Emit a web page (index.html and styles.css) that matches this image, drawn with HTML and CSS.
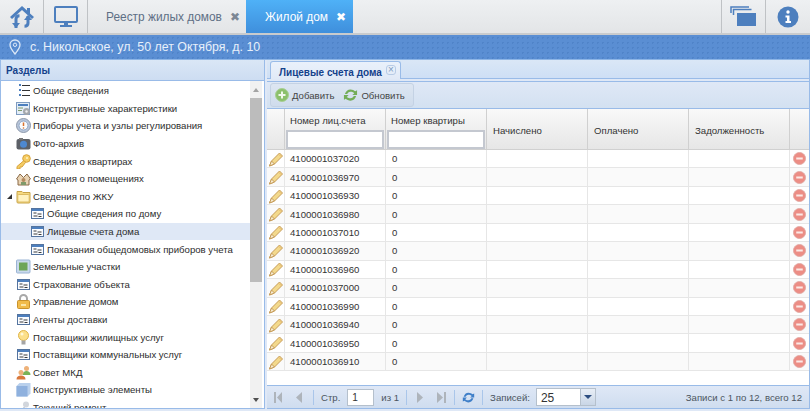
FILE: index.html
```html
<!DOCTYPE html>
<html>
<head>
    <title>Жилой дом</title>
    <link rel="stylesheet" href="styles.css">
</head>
<body>
    <svg class="defs">
        <defs>
            <symbol id="i-doc" viewBox="0 0 15 15">
                <rect x="1.500" y="2.500" width="12" height="10" fill="#fafcff" stroke="#54749f"/>
                <rect x="2" y="3" width="11" height="2" fill="#4d7fbe"/>
                <path d="M3.500 7h3M7.500 8h4M3.500 10h4M8.500 10.500h3" stroke="#3b3b3b" fill="none"/>
            </symbol>
            <symbol id="i-pencil" viewBox="0 0 16 16">
                <path d="M3.500 10 11.500 2 14.500 5 6.500 13 1.500 15Z" fill="#f3d98c" stroke="#c69c58"/>
                <path d="M11 3.500 13 5.500" stroke="#e9b765" fill="none"/>
                <path d="M1.500 15 3.500 10 6.500 13Z" fill="#f6ead0" stroke="#c69c58"/>
            </symbol>
            <symbol id="i-minus" viewBox="0 0 14 14">
                <circle cx="7" cy="7" r="6.500" fill="#ec8d85" stroke="#e2aaa4"/>
                <rect x="3.500" y="5.900" width="7" height="2.200" fill="#fbe9e6"/>
            </symbol>
        </defs>
    </svg>

    <header class="topbar">
        <div class="top-btn">
            <svg width="26" height="24" viewBox="0 0 26 24">
                <path d="M13 1 1 12l2 2L13 5l10 9 2-2-4-3.600V3h-3v2.600Z" fill="#4d7fbe"/>
                <path d="M7 23V14c0-2 1.500-3.200 3.500-3.200" fill="none" stroke="#4d7fbe" stroke-width="3"/>
                <path d="M3 18h8l-4 5Z" fill="#4d7fbe"/>
                <path d="M19 11v7c0 2-1.500 3.200-3.500 3.200" fill="none" stroke="#4d7fbe" stroke-width="3"/>
                <path d="M15 15h8l-4-5Z" fill="#4d7fbe"/>
            </svg>
        </div>
        <div class="top-btn">
            <svg width="24" height="22" viewBox="0 0 24 22">
                <rect x="1" y="1" width="22" height="15" rx="1" fill="none" stroke="#4d7fbe" stroke-width="2"/>
                <path d="M10 17h4v2h4v2H6v-2h4Z" fill="#4d7fbe"/>
            </svg>
        </div>
        <div class="tab">Реестр жилых домов <span class="tab-x">✖</span></div>
        <div class="tab tab-active">Жилой дом <span class="tab-x">✖</span></div>
        <div class="top-fill"></div>
        <div class="top-btn top-btn-right">
            <svg width="27" height="21" viewBox="0 0 27 21">
                <path d="M1 7V1h18M3.500 9V3.500h18" fill="none" stroke="#4d7fbe" stroke-width="1.500"/>
                <rect x="7" y="7" width="19" height="13" fill="#4d7fbe"/>
            </svg>
        </div>
        <div class="top-btn top-btn-right top-btn-last">
            <svg width="22" height="22" viewBox="0 0 22 22">
                <circle cx="11" cy="11" r="10.500" fill="#4d7fbe"/>
                <circle cx="11" cy="6" r="1.700" fill="#fff"/>
                <path d="M8.500 9.500H12.500V15H14V17H8.500V15H10V11.500H8.500Z" fill="#fff"/>
            </svg>
        </div>
    </header>

    <div class="address">
        <svg width="12" height="16" viewBox="0 0 12 16">
            <path d="M6 1C3 1 1 3.200 1 5.800 1 9 6 15 6 15s5-6 5-9.200C11 3.200 9 1 6 1Z" fill="none" stroke="#dbe7f6" stroke-width="1.300"/>
            <circle cx="6" cy="5.800" r="1.700" fill="none" stroke="#dbe7f6"/>
        </svg>
        с. Никольское, ул. 50 лет Октября, д. 10
    </div>

    <main class="content">
        <aside class="side">
            <div class="side-title">Разделы</div>
            <div class="side-body">
                <ul class="tree">
                    <li><svg class="ico" viewBox="0 0 15 15"><path d="M3 2h2M3 7h2M3 12h2" stroke="#4d7fbe" stroke-width="2"/><path d="M6 2.500h8M6 7.500h8M6 12.500h8" stroke="#333"/></svg>Общие сведения</li>
                    <li><svg class="ico" viewBox="0 0 15 15"><rect x="0.500" y="1.500" width="13" height="12" fill="#e4edf7" stroke="#7f9cc0"/><path d="M2 4h10" stroke="#4d7fbe" stroke-width="2"/><path d="M2 7h5M2 9.500h4" stroke="#7d9a6a"/><circle cx="10.500" cy="10.500" r="3.500" fill="#a4a8ad"/><circle cx="10.500" cy="10.500" r="1.200" fill="#eee"/></svg>Конструктивные характеристики</li>
                    <li><svg class="ico" viewBox="0 0 15 15"><circle cx="7.500" cy="7.500" r="7" fill="#b9c6da" stroke="#8d99ab"/><circle cx="7.500" cy="7.500" r="4.500" fill="#fbfbfb" stroke="#8fa6c6"/><path d="M7.500 4.500v3.500" stroke="#d8702c" stroke-width="1.500"/><circle cx="7.500" cy="10" r="0.800" fill="#d8702c"/></svg>Приборы учета и узлы регулирования</li>
                    <li><svg class="ico" viewBox="0 0 15 15"><rect x="0.500" y="3" width="14" height="10.500" rx="2" fill="#5c6067"/><rect x="3" y="2" width="4" height="2" fill="#777"/><circle cx="7.500" cy="8.200" r="3.500" fill="#4d88d0"/></svg>Фото-архив</li>
                    <li><svg class="ico" viewBox="0 0 15 15"><circle cx="10.500" cy="4.500" r="3.800" fill="#f5cc62" stroke="#d6a23c"/><path d="M8 6.500 1 12.500V15h3v-2h2l3.500-4.500Z" fill="#f5cc62" stroke="#d6a23c"/><circle cx="11" cy="4" r="1" fill="#fff3c4"/></svg>Сведения о квартирах</li>
                    <li><svg class="ico" viewBox="0 0 15 15"><path d="M0.500 8 4 3l3.500 3.500L11 3l3.500 5-1.500 1v5H2V9Z" fill="#e8d3b4" stroke="#8b6a47"/><circle cx="7.500" cy="9" r="2" fill="#b48a5e"/><rect x="5" y="11" width="5" height="3" fill="#7f9a6a"/></svg>Сведения о помещениях</li>
                    <li class="has-arrow"><span class="arrow"></span><svg class="ico" viewBox="0 0 15 15"><path d="M1 3.500V2.500h5l1 1h7v9.500a1 1 0 0 1-1 1H2a1 1 0 0 1-1-1Z" fill="#f6d97f" stroke="#c8a44a"/><rect x="1.800" y="5.500" width="11.400" height="7.500" rx="1" fill="#fff2c0" stroke="#dcbb62"/></svg>Сведения по ЖКУ</li>
                    <li class="sub"><svg class="ico"><use href="#i-doc"/></svg>Общие сведения по дому</li>
                    <li class="sub selected"><svg class="ico"><use href="#i-doc"/></svg>Лицевые счета дома</li>
                    <li class="sub"><svg class="ico"><use href="#i-doc"/></svg>Показания общедомовых приборов учета</li>
                    <li><svg class="ico" viewBox="0 0 15 15"><rect x="0.500" y="1" width="13.500" height="13" rx="1" fill="#c9d9ec" stroke="#9bb4d4"/><rect x="3" y="3.500" width="8.500" height="8" fill="#6da558"/></svg>Земельные участки</li>
                    <li><svg class="ico"><use href="#i-doc"/></svg>Страхование объекта</li>
                    <li><svg class="ico" viewBox="0 0 15 15"><path d="M4 7V4.500a3.500 3.500 0 0 1 7 0V7" fill="none" stroke="#a9a9a9" stroke-width="2"/><rect x="1.500" y="6.500" width="12" height="8" rx="1" fill="#f1bb4a" stroke="#c9922c"/><path d="M5 11h5" stroke="#fbe6a8" stroke-width="2"/></svg>Управление домом</li>
                    <li><svg class="ico"><use href="#i-doc"/></svg>Агенты доставки</li>
                    <li><svg class="ico" viewBox="0 0 15 15"><circle cx="7.500" cy="5.500" r="5" fill="#fce08a" stroke="#e0b548"/><circle cx="6" cy="4" r="1.500" fill="#fff8d8"/><rect x="5.500" y="10.500" width="4" height="4" fill="#a5a5a5"/></svg>Поставщики жилищных услуг</li>
                    <li><svg class="ico"><use href="#i-doc"/></svg>Поставщики коммунальных услуг</li>
                    <li><svg class="ico" viewBox="0 0 15 15"><circle cx="10.500" cy="3.500" r="2.500" fill="#eeb27a"/><path d="M6.500 10c0-3 2-4 4-4s4 1 4 4Z" fill="#79b257"/><circle cx="5" cy="7.500" r="2.500" fill="#eeb27a"/><path d="M0.500 14.500c0-3 2-4 4.500-4s4.500 1 4.500 4Z" fill="#d9783c"/></svg>Совет МКД</li>
                    <li><svg class="ico" viewBox="0 0 15 15"><path d="M0.500 4 3.500 1h11v10.500l-3 3H0.500Z" fill="#b9d0ec"/><path d="M0.500 4h11v10.500H0.500Z" fill="#8fb1de"/></svg>Конструктивные элементы</li>
                    <li><svg class="ico" viewBox="0 0 15 15"><path d="M1 14.500 8 7l2 2-7 6.500Z" fill="#a0a9b5"/><circle cx="10" cy="4.500" r="3" fill="#d2d6dc"/></svg>Текущий ремонт</li>
                </ul>
                <div class="scroll">
                    <span class="scroll-up"></span>
                    <span class="scroll-thumb"></span>
                    <span class="scroll-down"></span>
                </div>
            </div>
        </aside>

        <section class="panel">
            <div class="panel-tabs">
                <div class="panel-tab">Лицевые счета дома <span class="panel-tab-x">×</span></div>
            </div>
            <div class="tab-strip"></div>
            <div class="toolbar">
                <div class="tool-group">
                    <span class="tool tool-add">
                        <svg width="14" height="14" viewBox="0 0 14 14"><circle cx="7" cy="7" r="6.500" fill="#8cc06c" stroke="#a8cf94"/><path d="M7 3.500v7M3.500 7h7" stroke="#f1f8ec" stroke-width="2"/></svg>
                        Добавить
                    </span>
                    <span class="tool">
                        <svg width="15" height="14" viewBox="0 0 16 14"><path d="M2 6c1-3 3-5 6-5 2 0 4 1 5 2l2-1v5H10l2-2C11 4 9 3.500 8 3.500 6 3.500 5 5 4.500 6Z" fill="#74ad58"/><path d="M14 8c-1 3-3 5-6 5-2 0-4-1-5-2l-2 1V7h5L4 9c1 1 3 1.500 4 1.500 2 0 3-1.500 3.500-2.500Z" fill="#74ad58"/></svg>
                        Обновить
                    </span>
                </div>
            </div>

            <div class="grid">
                <div class="grid-head">
                    <div class="hc hc-edit"></div>
                    <div class="hc hc-filter">Номер лиц.счета<input class="filter" type="text"></div>
                    <div class="hc hc-filter">Номер квартиры<input class="filter" type="text"></div>
                    <div class="hc hc-num">Начислено</div>
                    <div class="hc hc-num">Оплачено</div>
                    <div class="hc hc-num">Задолженность</div>
                    <div class="hc hc-del"></div>
                </div>
                <div class="grid-body">
                    <div class="row"><div class="c c-edit"><svg class="pen"><use href="#i-pencil"/></svg></div><div class="c">4100001037020</div><div class="c c-flat">0</div><div class="c"></div><div class="c"></div><div class="c"></div><div class="c c-del"><svg class="del"><use href="#i-minus"/></svg></div></div>
                    <div class="row"><div class="c c-edit"><svg class="pen"><use href="#i-pencil"/></svg></div><div class="c">4100001036970</div><div class="c c-flat">0</div><div class="c"></div><div class="c"></div><div class="c"></div><div class="c c-del"><svg class="del"><use href="#i-minus"/></svg></div></div>
                    <div class="row"><div class="c c-edit"><svg class="pen"><use href="#i-pencil"/></svg></div><div class="c">4100001036930</div><div class="c c-flat">0</div><div class="c"></div><div class="c"></div><div class="c"></div><div class="c c-del"><svg class="del"><use href="#i-minus"/></svg></div></div>
                    <div class="row"><div class="c c-edit"><svg class="pen"><use href="#i-pencil"/></svg></div><div class="c">4100001036980</div><div class="c c-flat">0</div><div class="c"></div><div class="c"></div><div class="c"></div><div class="c c-del"><svg class="del"><use href="#i-minus"/></svg></div></div>
                    <div class="row"><div class="c c-edit"><svg class="pen"><use href="#i-pencil"/></svg></div><div class="c">4100001037010</div><div class="c c-flat">0</div><div class="c"></div><div class="c"></div><div class="c"></div><div class="c c-del"><svg class="del"><use href="#i-minus"/></svg></div></div>
                    <div class="row"><div class="c c-edit"><svg class="pen"><use href="#i-pencil"/></svg></div><div class="c">4100001036920</div><div class="c c-flat">0</div><div class="c"></div><div class="c"></div><div class="c"></div><div class="c c-del"><svg class="del"><use href="#i-minus"/></svg></div></div>
                    <div class="row"><div class="c c-edit"><svg class="pen"><use href="#i-pencil"/></svg></div><div class="c">4100001036960</div><div class="c c-flat">0</div><div class="c"></div><div class="c"></div><div class="c"></div><div class="c c-del"><svg class="del"><use href="#i-minus"/></svg></div></div>
                    <div class="row"><div class="c c-edit"><svg class="pen"><use href="#i-pencil"/></svg></div><div class="c">4100001037000</div><div class="c c-flat">0</div><div class="c"></div><div class="c"></div><div class="c"></div><div class="c c-del"><svg class="del"><use href="#i-minus"/></svg></div></div>
                    <div class="row"><div class="c c-edit"><svg class="pen"><use href="#i-pencil"/></svg></div><div class="c">4100001036990</div><div class="c c-flat">0</div><div class="c"></div><div class="c"></div><div class="c"></div><div class="c c-del"><svg class="del"><use href="#i-minus"/></svg></div></div>
                    <div class="row"><div class="c c-edit"><svg class="pen"><use href="#i-pencil"/></svg></div><div class="c">4100001036940</div><div class="c c-flat">0</div><div class="c"></div><div class="c"></div><div class="c"></div><div class="c c-del"><svg class="del"><use href="#i-minus"/></svg></div></div>
                    <div class="row"><div class="c c-edit"><svg class="pen"><use href="#i-pencil"/></svg></div><div class="c">4100001036950</div><div class="c c-flat">0</div><div class="c"></div><div class="c"></div><div class="c"></div><div class="c c-del"><svg class="del"><use href="#i-minus"/></svg></div></div>
                    <div class="row"><div class="c c-edit"><svg class="pen"><use href="#i-pencil"/></svg></div><div class="c">4100001036910</div><div class="c c-flat">0</div><div class="c"></div><div class="c"></div><div class="c"></div><div class="c c-del"><svg class="del"><use href="#i-minus"/></svg></div></div>
                </div>
            </div>

            <div class="pager">
                <svg class="pg pg-first" width="8" height="11" viewBox="0 0 8 11"><path d="M0 0h2v11H0ZM8 0v11L3 5.500Z" fill="#aeb4bb"/></svg>
                <svg class="pg pg-prev" width="6" height="11" viewBox="0 0 6 11"><path d="M6 0v11L0 5.500Z" fill="#aeb4bb"/></svg>
                <span class="sep"></span>
                <span>Стр.</span>
                <input class="page-input" type="text" value="1">
                <span>из 1</span>
                <span class="sep"></span>
                <svg class="pg pg-next" width="6" height="11" viewBox="0 0 6 11"><path d="M0 0v11L6 5.500Z" fill="#aeb4bb"/></svg>
                <svg class="pg pg-last" width="9" height="11" viewBox="0 0 9 11"><path d="M0 0v11L6 5.500ZM7 0h2v11H7Z" fill="#aeb4bb"/></svg>
                <span class="sep"></span>
                <svg width="13" height="13" viewBox="0 0 16 14"><path d="M2 6c1-3 3-5 6-5 2 0 4 1 5 2l2-1v5H10l2-2C11 4 9 3.500 8 3.500 6 3.500 5 5 4.500 6Z" fill="#3f7fc8"/><path d="M14 8c-1 3-3 5-6 5-2 0-4-1-5-2l-2 1V7h5L4 9c1 1 3 1.500 4 1.500 2 0 3-1.500 3.500-2.500Z" fill="#3f7fc8"/></svg>
                <span class="sep"></span>
                <span>Записей:</span>
                <div class="combo"><span class="combo-val">25</span><span class="combo-btn"></span></div>
                <span class="pager-info">Записи с 1 по 12, всего 12</span>
            </div>
        </section>
    </main>
</body>
</html>
```

FILE: styles.css
```css
* {
    box-sizing: border-box;
}
html, body {
    height: 100%;
}
body {
    margin: 0;
    overflow: hidden;
    display: flex;
    flex-direction: column;
    font-family: "Liberation Sans", Arial, sans-serif;
    font-size: 9.600px;
    color: #333;
    background: #fff;
}
.defs {
    display: none;
}

/* top bar */
.topbar {
    display: flex;
    height: 35px;
    flex: none;
    background: linear-gradient(#eef0f2, #e3e5e7);
    border-bottom: 2px solid #c9cbcd;
}
.top-btn {
    width: 44px;
    display: flex;
    align-items: center;
    justify-content: center;
    border-right: 1px solid #bfc2c5;
}
.top-btn-right {
    border-right: none;
    border-left: 1px solid #bfc2c5;
}
.top-btn-last {
    width: 45px;
}
.topbar .tab {
    display: flex;
    align-items: center;
    gap: 8px;
    padding-left: 18px;
    width: 158px;
    font-size: 11.900px;
    color: #5e6f85;
}
.topbar .tab-active {
    width: 107px;
    padding-left: 19px;
    color: #fff;
    background: linear-gradient(#4fb1f7, #3f8fdc);
}
.tab-x {
    font-size: 12px;
    color: #7c8794;
}
.tab-active .tab-x {
    color: #fff;
}
.top-fill {
    flex: 1;
}

/* address */
.address {
    display: flex;
    align-items: center;
    gap: 9px;
    flex: none;
    height: 25px;
    padding-left: 9px;
    font-size: 12.400px;
    color: #e8f0fa;
    background-color: #5a8ed3;
    background-image: radial-gradient(#5084c9 1px, transparent 1px);
    background-size: 5px 5px;
    border-bottom: 1px solid #8db5e6;
}

/* content */
.content {
    flex: 1;
    display: flex;
    gap: 2px;
    min-height: 0;
    padding-bottom: 2px;
    background: #dfe8f6;
}
.side {
    width: 265px;
    display: flex;
    flex-direction: column;
    border: 1px solid #99bbe8;
    border-width: 0 1px 1px;
}
.side-title {
    height: 21px;
    flex: none;
    padding: 5px 0 0 5px;
    font-weight: bold;
    font-size: 10px;
    color: #15428b;
    background: linear-gradient(#dae7f6, #cdddf2);
    border-bottom: 1px solid #99bbe8;
}
.side-body {
    flex: 1;
    display: flex;
    min-height: 0;
    padding-right: 2px;
    background: #fff;
}
.tree {
    flex: 1;
    list-style: none;
    margin: 0;
    padding: 1px 0 0;
    overflow: hidden;
}
.tree li {
    display: flex;
    align-items: center;
    gap: 2px;
    height: 17.600px;
    padding-left: 15px;
    white-space: nowrap;
    color: #2c2c2c;
}
.tree li.sub {
    padding-left: 29px;
}
.tree li.selected {
    background: #dfe8f6;
}
.tree li.has-arrow {
    padding-left: 6px;
}
.arrow {
    width: 0;
    height: 0;
    margin-right: 2px;
    border-style: solid;
    border-width: 0 0 5px 5px;
    border-color: transparent transparent #333 transparent;
}
.ico {
    width: 15px;
    height: 15px;
    flex: none;
}
.scroll {
    width: 12px;
    flex: none;
    display: flex;
    flex-direction: column;
    align-items: center;
    background: #f1f1f1;
}
.scroll-up, .scroll-down {
    width: 0;
    height: 0;
    margin: 7px 0 6px;
    border-style: solid;
    border-width: 0 3.500px 4px;
    border-color: transparent transparent #a3a3a3;
}
.scroll-down {
    margin-top: auto;
    border-width: 4px 3.500px 0;
    border-color: #505050 transparent transparent;
}
.scroll-thumb {
    width: 100%;
    height: 184px;
    background: #bcbcbc;
}

/* right panel */
.panel {
    flex: 1;
    min-width: 0;
    display: flex;
    flex-direction: column;
    border-right: 1px solid #99bbe8;
}
.panel-tabs {
    height: 19px;
    flex: none;
    padding: 1px 0 0 3px;
    background: linear-gradient(#dae7f6, #cedff5);
    border-bottom: 1px solid #99bbe8;
}
.panel-tab {
    display: inline-flex;
    align-items: center;
    gap: 4px;
    height: 21px;
    padding: 0 4px 0 8px;
    font-weight: bold;
    font-size: 10px;
    color: #15428b;
    background: linear-gradient(#eaf1fb, #dfe8f6);
    border: 1px solid #99bbe8;
    border-bottom: none;
    border-radius: 3px 3px 0 0;
}
.panel-tab-x {
    width: 10px;
    height: 10px;
    margin-top: -5px;
    line-height: 8px;
    text-align: center;
    font-size: 10px;
    font-weight: normal;
    color: #7f9cc0;
    border: 1px solid #b7cbe6;
    border-radius: 3px;
}
.tab-strip {
    height: 3px;
    flex: none;
    background: #dfe8f6;
    border-bottom: 1px solid #99bbe8;
}
.toolbar {
    height: 27px;
    flex: none;
    padding: 1px 3px;
    background: linear-gradient(#dfe8f6, #d3e1f1);
    border-bottom: 1px solid #99bbe8;
}
.tool-group {
    display: inline-flex;
    align-items: center;
    gap: 9px;
    height: 24px;
    padding: 0 8px 0 4px;
    background: linear-gradient(#dde6f2, #cfdcec);
    border: 1px solid #c4d2e4;
    border-radius: 3px;
}
.tool {
    display: inline-flex;
    align-items: center;
    gap: 3px;
    color: #444;
}

/* grid */
.grid {
    flex: 1;
    min-height: 0;
    display: flex;
    flex-direction: column;
    background: #fff;
}
.grid-head, .row {
    display: grid;
    grid-template-columns: 18px 101px 101px 101px 101px 101px 1fr;
}
.grid-head {
    height: 41px;
    flex: none;
    background: linear-gradient(#f9f9f9, #e6e6e6);
    border-bottom: 1px solid #d0d0d0;
}
.hc {
    padding-left: 6px;
    border-right: 1px solid #d0d0d0;
    color: #333;
}
.hc-filter {
    padding: 6px 0 0 0;
    display: flex;
    flex-direction: column;
    gap: 4px;
    text-indent: 5px;
}
.hc-num {
    display: flex;
    align-items: center;
    padding-top: 2px;
}
.hc-del {
    border-right: none;
}
.filter {
    display: block;
    width: 98px;
    height: 19px;
    margin: 0 0 0 1px;
    padding: 0;
    background: #fff;
    border: 2px solid #c4c8d0;
}
.row {
    height: 18.450px;
    border-bottom: 1px solid #e6e6e6;
}
.row:nth-child(even) {
    background: #fafafa;
}
.c {
    display: flex;
    align-items: center;
    padding-left: 5px;
    border-right: 1px solid #e6e6e6;
    color: #333;
}
.c-flat {
    padding-left: 6px;
}
.c-edit {
    padding-left: 1px;
}
.c-del {
    border-right: none;
    padding-left: 3px;
}
.pen {
    width: 16px;
    height: 16px;
}
.del {
    width: 13px;
    height: 13px;
}

/* pager */
.pager {
    display: flex;
    align-items: center;
    gap: 7px;
    height: 24px;
    flex: none;
    padding: 0 7px 0 7px;
    color: #4c5560;
    background: linear-gradient(#dfe8f6, #cfddef);
    border-top: 1px solid #99bbe8;
    border-bottom: 1px solid #99bbe8;
}
.pg {
    flex: none;
    margin-right: 4px;
}
.pg-prev, .pg-last {
    margin-left: 3px;
}
.pg-next {
    margin-left: 3px;
}
.pg-last {
    margin-right: 1px;
}
.sep {
    width: 1px;
    height: 15px;
    background: #aac6ea;
}
.page-input {
    width: 27px;
    height: 17px;
    margin: 0;
    padding: 0 0 0 4px;
    font: 10px "Liberation Sans", Arial, sans-serif;
    color: #333;
    border: 1px solid #b5c0cc;
}
.combo {
    display: flex;
    width: 60px;
    height: 18px;
    margin-left: -1px;
    background: #fff;
    border: 1px solid #b5c0cc;
}
.combo-val {
    flex: 1;
    padding: 2px 0 0 4px;
    font-size: 12px;
    color: #333;
}
.combo-btn {
    position: relative;
    width: 15px;
    background: linear-gradient(#e8eef6, #c9d6e6);
    border-left: 1px solid #b5c0cc;
}
.combo-btn::after {
    content: "";
    position: absolute;
    top: 6px;
    left: 3px;
    width: 0;
    height: 0;
    border-style: solid;
    border-width: 4px 4px 0;
    border-color: #2c4d80 transparent transparent;
}
.pager-info {
    margin-left: auto;
}
```
